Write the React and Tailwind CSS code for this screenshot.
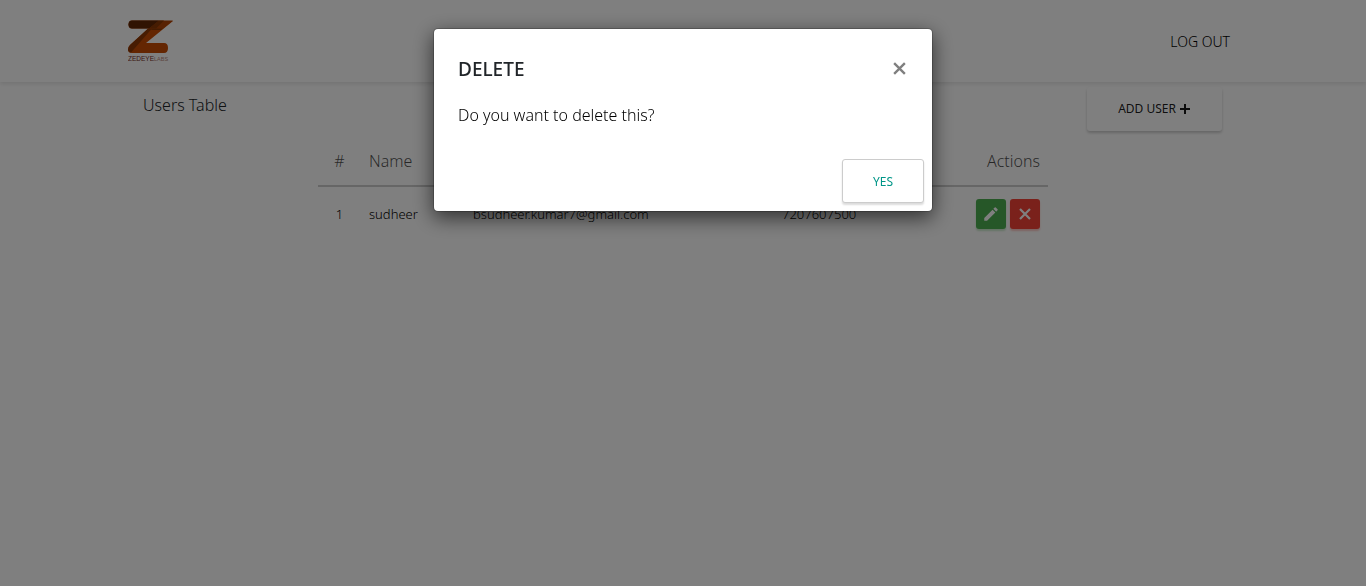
import React from "react";
import { MdEdit } from "react-icons/md";

const users = [
  { id: 1, name: "sudheer", email: "bsudheer.kumar7@gmail.com", phone: "7207607500" },
];

function Logo() {
  return (
    <svg viewBox="0 0 46 42" className="h-[42px] w-[46px]" role="img" aria-label="Zedeyelabs">
      <path d="M34 1H45L18 23H36Q40 23 40 28Q40 33 36 33H4Q0 33 0 29.500Q0 27 2 25L21 8H26Z" fill="#c84c04" />
      <path d="M4 0.500H45L35 8.500H4Q0.500 8.500 0.500 4.500Q0.500 0.500 4 0.500Z" fill="#b04406" />
      <path d="M4 0.500H31L21 8.500H4Q0.500 8.500 0.500 4.500Q0.500 0.500 4 0.500Z" fill="#602604" />
      <path d="M21 8.500L31 0.500H36L28 8.500Z" fill="#8a3804" />
      <path d="M20 8.500H24L3 32.500Q0 32 0 29.500Q0 27 2 25Z" fill="#8e3804" />
      <path d="M24 8.500H35L33 10H23Z" fill="#8a3804" />
      <text x="0" y="41" fontSize="6.500" fontFamily="Liberation Sans, sans-serif" fill="#783028">
        ZEDEYE<tspan fill="#b88878" fontSize="5.500">LABS</tspan>
      </text>
    </svg>
  );
}

function CrossIcon({ className }) {
  return (
    <svg viewBox="0 0 14 14" className={className} aria-hidden="true" fill="none" stroke="currentColor" strokeWidth="2.2">
      <path d="M2 2L12 12M12 2L2 12" />
    </svg>
  );
}

function PlusIcon() {
  return (
    <svg viewBox="0 0 12 12" className="size-3" aria-hidden="true" fill="none" stroke="currentColor" strokeWidth="2">
      <path d="M6 1V11M1 6H11" />
    </svg>
  );
}

function Header() {
  return (
    <header className="bg-white shadow-[0_2px_4px_rgba(0,0,0,0.1)]">
      <div className="mx-auto flex h-[82px] max-w-[1140px] items-center justify-between px-[15px]">
        <a href="#home" className="block"><Logo /></a>
        <nav>
          <a href="#logout" className="block px-2 py-2 text-[14px] font-light text-black">LOG OUT</a>
        </nav>
      </div>
    </header>
  );
}

function UsersTable() {
  return (
    <table className="mx-auto mt-1 w-[730px] max-w-full text-left text-[#212529]">
      <thead>
        <tr className="border-b-2 border-black/20 text-[16px] text-black/70">
          <th className="h-[51px] w-[43px] px-2 pt-px text-center font-light">#</th>
          <th className="w-[104px] px-2 pt-px font-light">Name</th>
          <th className="w-[309px] px-2 pt-px font-light">Email</th>
          <th className="px-2 pt-px font-light">Phone</th>
          <th className="px-2 pt-px text-right font-light">Actions</th>
        </tr>
      </thead>
      <tbody className="text-[13px] font-light text-black">
        {users.map((user) => (
          <tr key={user.id}>
            <td className="h-[55px] px-2 pt-px text-center">{user.id}</td>
            <td className="px-2 pt-px">{user.name}</td>
            <td className="px-2 pt-px">{user.email}</td>
            <td className="px-2 pt-px">{user.phone}</td>
            <td className="px-2">
              <div className="flex justify-end gap-1">
                <button type="button" aria-label="Edit user" className="flex size-[30px] items-center justify-center rounded-[3px] bg-[#4caf50] text-white shadow-[0_2px_2px_rgba(76,175,80,0.3)]">
                  <MdEdit size={18} />
                </button>
                <button type="button" aria-label="Delete user" className="flex size-[30px] items-center justify-center rounded-[3px] bg-[#f44336] text-white shadow-[0_2px_2px_rgba(244,67,54,0.3)]">
                  <CrossIcon className="size-[14px]" />
                </button>
              </div>
            </td>
          </tr>
        ))}
      </tbody>
    </table>
  );
}

function DeleteDialog() {
  return (
    <div className="fixed inset-0 flex items-start justify-center bg-black/50 px-2 pt-7">
      <div role="dialog" aria-modal="true" aria-labelledby="dialog-title" className="w-full max-w-[500px] rounded-[5px] border border-black/20 bg-white bg-clip-padding text-[#212529] shadow-[0_6px_20px_rgba(0,0,0,0.6)]">
        <div className="flex items-center justify-between px-6 pt-6">
          <h5 id="dialog-title" className="text-[19px] leading-8 font-medium">DELETE</h5>
          <button type="button" aria-label="Close" className="px-px pb-[2px] text-[#7f7f7f]">
            <CrossIcon className="size-[15px]" />
          </button>
        </div>
        <p className="px-6 pt-[18px] text-[16px] leading-6 font-light text-black">Do you want to delete this?</p>
        <div className="flex justify-end px-2 pt-8 pb-2">
          <button type="button" className="h-11 rounded-[3px] border border-[#ccc] bg-white px-[30px] pt-px text-[12px] text-[#009688] shadow-[0_2px_2px_rgba(0,0,0,0.14)]">YES</button>
        </div>
      </div>
    </div>
  );
}

export default function App() {
  return (
    <div className="min-h-screen bg-white font-['Noto_Sans',sans-serif]">
      <Header />
      <main className="mx-auto max-w-[1140px] px-[15px]">
        <div className="flex items-start justify-between px-[15px] pt-[5px]">
          <h1 className="pt-1 text-[16px] leading-7 font-light text-[#212529]">Users Table</h1>
          <button type="button" className="mr-px flex h-11 items-center gap-[3px] rounded-[3px] bg-white px-[31px] text-[12px] text-black/90 shadow-[0_2px_3px_rgba(0,0,0,0.2)]">
            ADD USER
            <PlusIcon />
          </button>
        </div>
        <UsersTable />
      </main>
      <DeleteDialog />
    </div>
  );
}
